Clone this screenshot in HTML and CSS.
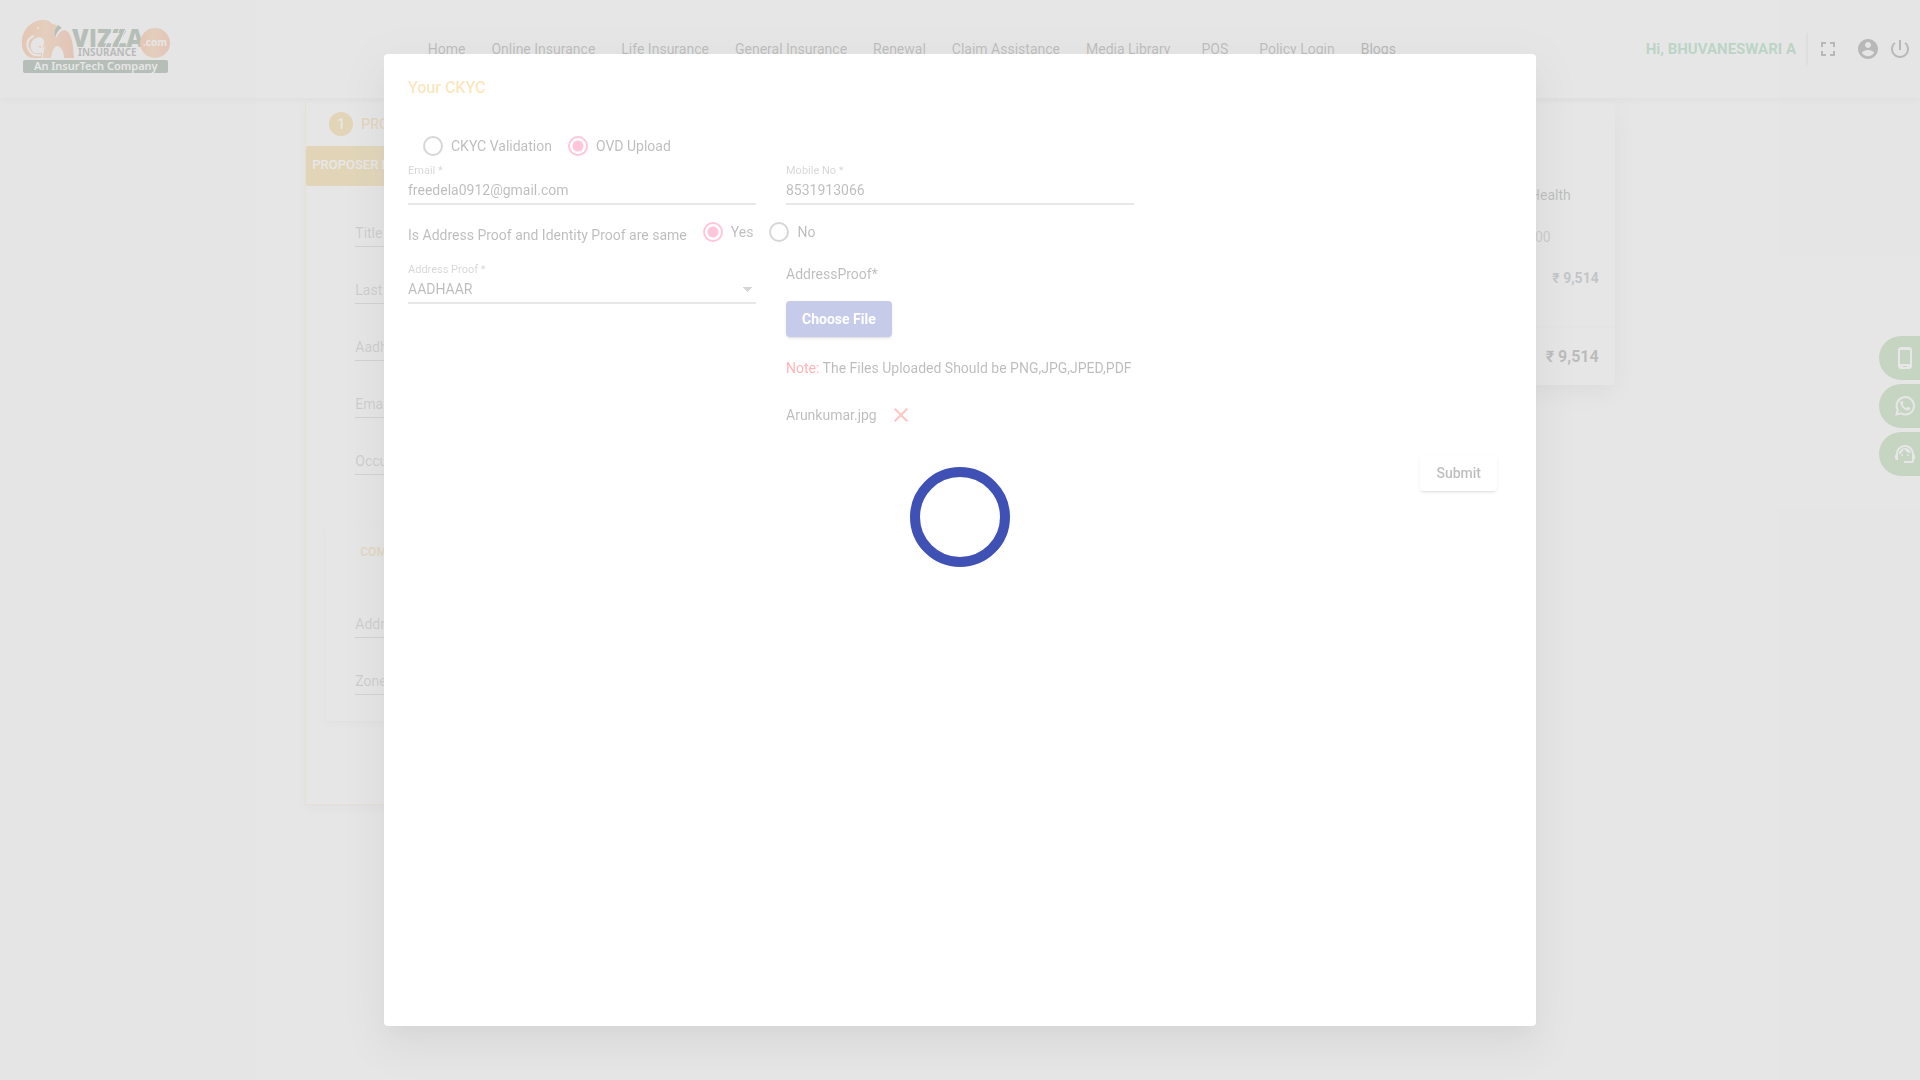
FILE: index.html
```
<!DOCTYPE html>
<html lang="en">
<head>
<meta charset="utf-8">
<meta name="viewport" content="width=device-width, initial-scale=1">
<title>Vizza Insurance</title>
<link rel="stylesheet" href="styles.css">
</head>
<body>
<header class="header">
  <a class="logo" href="#" aria-label="Vizza Insurance">
    <svg width="150" height="58" viewBox="0 0 150 58">
      <defs>
        <linearGradient id="orange" x1="0" y1="0" x2="1" y2="0"><stop offset="0" stop-color="#f3620c"/><stop offset=".45" stop-color="#f58a35"/><stop offset="1" stop-color="#ee5a1c"/></linearGradient>
      </defs>
      <path fill="url(#orange)" d="M0 25C-1 10 10 1 22 1c4 0 6 1 8 4l5 1c-2 5-2 9-1 13 2-4 5-8 9-8 5 2 7 9 8 16l1 12H42c0-6-2-11-7-12-4 1-5 7-6 12H21c0-5 1-9 3-12-3 3-6 3-8 0 3 1 6-1 6-4 0-4-4-6-8-4-5 2-7 8-4 13 2 3 6 2 10 2v5H12C5 39 0 33 0 25z"/>
      <path fill="none" stroke="#fff" stroke-width="2" d="M12 17c-7 2-8 9-5 14 2 4 6 6 12 5M20 20c1 6 1 9-2 12"/>
      <circle cx="16" cy="9" r="1" fill="#fff"/>
      <path fill="#163d20" d="M33 18c-1-5 0-9 3-12l4 3c-4 2-5 5-7 9z"/>
      <text class="logo-name" x="50" y="28">VIZZA</text>
      <path stroke="#fff" stroke-width="1" d="M92 9l-9 19M98 9l-9 19M104 9l-8 19"/>
      <text class="logo-sub" x="56" y="37">INSURANCE</text>
      <circle cx="133" cy="24" r="15" fill="url(#orange)"/>
      <text class="logo-com" x="121" y="27">.com</text>
      <rect x="1" y="41" width="145" height="13" rx="2" fill="#163d20"/>
      <text class="logo-tag" x="12" y="51">An InsurTech Company</text>
    </svg>
  </a>
  <nav class="nav">
    <a href="#">Home</a><a href="#">Online Insurance</a><a href="#">Life Insurance</a><a href="#">General Insurance</a><a href="#">Renewal</a><a href="#">Claim Assistance</a><a href="#">Media Library</a><a class="nav-wide" href="#">POS</a><a href="#">Policy Login</a><a class="nav-strong" href="#">Blogs</a>
  </nav>
  <div class="user">
    <span class="greeting">Hi, BHUVANESWARI A</span>
    <span class="divider"></span>
    <button class="icon-button icon-wide" aria-label="Full screen"><svg width="24" height="24" viewBox="0 0 24 24"><path d="M7 14H5v5h5v-2H7v-3zm-2-4h2V7h3V5H5v5zm12 7h-3v2h5v-5h-2v3zM14 5v2h3v3h2V5h-5z"/></svg></button>
    <button class="icon-button" aria-label="Account"><svg width="24" height="24" viewBox="0 0 24 24"><path d="M12 2C6.48 2 2 6.48 2 12s4.48 10 10 10 10-4.480 10-10S17.520 2 12 2zm0 3c1.660 0 3 1.340 3 3s-1.340 3-3 3-3-1.340-3-3 1.340-3 3-3zm0 14.200c-2.500 0-4.710-1.280-6-3.220.03-1.990 4-3.080 6-3.080 1.990 0 5.970 1.090 6 3.080-1.290 1.940-3.500 3.220-6 3.220z"/></svg></button>
    <button class="icon-button" aria-label="Log out"><svg width="24" height="24" viewBox="0 0 24 24"><path d="M13 3h-2v10h2V3zm4.830 2.170l-1.420 1.420C17.990 7.860 19 9.810 19 12c0 3.870-3.130 7-7 7s-7-3.130-7-7c0-2.190 1.010-4.140 2.580-5.420L6.170 5.170C4.230 6.820 3 9.260 3 12c0 4.970 4.030 9 9 9s9-4.030 9-9c0-2.740-1.230-5.180-3.170-6.830z"/></svg></button>
  </div>
</header>

<main class="page">
  <section class="proposal">
    <div class="step"><span class="step-number">1</span>PROPOSER</div>
    <h2 class="band">PROPOSER DETAILS</h2>
    <div class="proposal-fields">
      <input class="line-input" placeholder="Title *" aria-label="Title">
      <input class="line-input" placeholder="Last Name *" aria-label="Last Name">
      <input class="line-input" placeholder="Aadhaar" aria-label="Aadhaar">
      <input class="line-input" placeholder="Email *" aria-label="Email">
      <input class="line-input" placeholder="Occupation *" aria-label="Occupation">
    </div>
    <div class="address">
      <h3>COMMUNICATION</h3>
      <div class="address-fields">
        <input class="line-input" placeholder="Address *" aria-label="Address">
        <input class="line-input" placeholder="Zone *" aria-label="Zone">
      </div>
    </div>
  </section>
  <aside class="summary">
    <p class="plan">Health</p>
    <p class="cover">5,00,000</p>
    <p class="premium">₹ 9,514</p>
    <p class="total">₹ 9,514</p>
  </aside>
</main>

<div class="contacts">
  <button class="contact" aria-label="Phone"><svg width="24" height="24" viewBox="0 0 24 24"><path fill-rule="evenodd" d="M16 1H8C6.300 1 5 2.300 5 4v16c0 1.700 1.300 3 3 3h8c1.700 0 3-1.300 3-3V4c0-1.700-1.300-3-3-3zm-2 20h-4v-1h4v1zm3-3H7V4h10v14z"/></svg></button>
  <button class="contact" aria-label="WhatsApp"><svg width="24" height="24" viewBox="0 0 24 24"><path fill="none" stroke="#fff" stroke-width="2" d="M3.500 20.500l1.200-4.400A8.700 8.700 0 1 1 8 19.400z"/><path d="M8.500 7c-.9.600-1.400 1.600-1 2.800.8 3 3.600 5.800 6.800 6.600 1.300.3 2.400-.5 2.800-1.600v-.8l-2.500-1.200-1.200 1.300c-1.900-.8-3-2-3.800-3.700l.9-1.100L9.500 7z"/></svg></button>
  <button class="contact" aria-label="Support"><svg width="24" height="24" viewBox="0 0 24 24"><path d="M21 12.220C21 6.730 16.740 3 12 3c-4.690 0-9 3.650-9 9.280-.6.340-1 .98-1 1.720v2c0 1.100.9 2 2 2h1v-6.100c0-3.870 3.130-7 7-7s7 3.130 7 7V19h-8v2h8c1.100 0 2-.9 2-2v-1.220c.59-.31 1-.92 1-1.640v-2.300c0-.7-.41-1.310-1-1.620z"/><circle cx="9" cy="13" r="1"/><circle cx="15" cy="13" r="1"/><path d="M18 11.030C17.520 8.180 15.040 6 12.050 6c-3.030 0-6.290 2.510-6.030 6.450 2.470-1.010 4.330-3.210 4.860-5.890 1.310 2.630 4 4.440 7.120 4.470z"/></svg></button>
</div>

<div class="backdrop">
  <div class="dialog" role="dialog" aria-modal="true" aria-labelledby="dialog-title">
    <h1 class="dialog-title" id="dialog-title">Your CKYC</h1>
    <form class="form">
      <div class="radios mode">
        <label class="radio"><input type="radio" name="mode">CKYC Validation</label>
        <label class="radio"><input type="radio" name="mode" checked>OVD Upload</label>
      </div>
      <div class="row contact-row">
        <div class="field"><label for="email">Email *</label><input id="email" type="email" value="freedela0912@gmail.com"></div>
        <div class="field"><label for="mobile">Mobile No *</label><input id="mobile" type="tel" value="8531913066"></div>
      </div>
      <div class="same">
        <span class="same-text" id="same-text">Is Address Proof and Identity Proof are same</span>
        <div class="radios" role="radiogroup" aria-labelledby="same-text">
          <label class="radio"><input type="radio" name="same" checked>Yes</label>
          <label class="radio"><input type="radio" name="same">No</label>
        </div>
      </div>
      <div class="row proof-row">
        <div class="field"><label for="proof">Address Proof *</label>
          <select id="proof"><option>AADHAAR</option></select></div>
        <div class="upload">
          <span>AddressProof*</span>
          <button class="button primary" type="button">Choose File</button>
          <p class="note"><span>Note:</span> The Files Uploaded Should be PNG,JPG,JPED,PDF</p>
          <div class="file"><span>Arunkumar.jpg</span><button class="remove" type="button" aria-label="Remove file"><svg width="24" height="24" viewBox="0 0 24 24"><path d="M19 6.410L17.590 5 12 10.590 6.410 5 5 6.410 10.590 12 5 17.590 6.410 19 12 13.410 17.590 19 19 17.590 13.410 12z"/></svg></button></div>
        </div>
      </div>
      <button class="button submit" type="submit">Submit</button>
    </form>
  </div>
</div>

<div class="loading" role="status" aria-label="Loading"><div class="spinner"></div></div>
</body>
</html>
```
FILE: styles.css
```
* { box-sizing: border-box; }
body {
  margin: 0;
  min-height: 100vh;
  background: #fafafa;
  color: rgba(0, 0, 0, .87);
  font: 14px/20px Roboto, "Noto Sans", sans-serif;
}
h1, h2, h3, p { margin: 0; font-weight: 500; }
a { color: inherit; text-decoration: none; }
button, input, select { font: inherit; color: inherit; margin: 0; }
button { border: 0; padding: 0; background: none; }
svg { display: block; fill: currentColor; }

.header {
  position: relative;
  display: flex;
  align-items: center;
  justify-content: space-between;
  height: 98px;
  padding: 0 8px 0 22px;
  background: #fafafa;
  box-shadow: 0 2px 8px rgba(0, 0, 0, .16);
}
.logo { width: 150px; margin-top: -2px; }
.logo-name { font: 800 24px "Open Sans", sans-serif; fill: #163d20; }
.logo-sub { font: 700 10px "Noto Sans", sans-serif; fill: #222; }
.logo-com { font: 700 10px "Noto Sans", sans-serif; fill: #fff; }
.logo-tag { font: 600 11px "Noto Sans", sans-serif; fill: #fff; }
.nav { display: flex; gap: 26px; margin-left: 6px; }
.nav-wide { margin: 0 5px; }
.nav-strong { color: #000; }
.user { display: flex; align-items: center; }
.greeting { font-size: 15px; font-weight: 700; color: #28a060; }
.divider { width: 2px; height: 32px; margin: 0 8px 0 10px; background: #d8d8d8; }
.icon-button { width: 24px; height: 24px; margin-left: 8px; }
.icon-wide { margin: 0 8px 0 0; }

.page {
  display: flex;
  align-items: flex-start;
  justify-content: space-between;
  width: 68.2%;
  margin: 0 auto;
  padding-top: 4px;
}
.proposal {
  width: 70%;
  padding-bottom: 83px;
  border: 1px solid #f4d9a4;
  border-top: 0;
  border-radius: 2px;
  background: #fafafa;
  box-shadow: 0 4px 12px rgba(0, 0, 0, .12);
}
.step { display: flex; align-items: center; gap: 8px; height: 44px; padding-left: 23px; color: #e6a32a; font-weight: 500; }
.step-number { width: 24px; height: 24px; border-radius: 50%; background: #e6a617; color: #fff; line-height: 24px; text-align: center; }
.band { height: 40px; padding-left: 6px; border-radius: 2px; background: #e6a617; color: #fff; font-size: 13px; line-height: 38px; }
.proposal-fields, .address-fields { display: grid; gap: 33px; width: 30%; }
.proposal-fields { margin: 37px 0 0 49px; }
.line-input { display: block; width: 100%; height: 24px; padding: 0 0 3px; border: 0; border-bottom: 1px solid rgba(0, 0, 0, .42); background: none; }
.line-input::placeholder { color: rgba(0, 0, 0, .54); opacity: 1; }
.address { margin: 49px 20px 0; padding: 18px 29px 26px; box-shadow: 0 3px 8px rgba(0, 0, 0, .12); }
.address h3 { padding-left: 5px; color: #e6a32a; font-size: 12px; }
.address-fields { margin-top: 52px; }
.summary {
  width: 25%;
  border-radius: 4px;
  background: #fafafa;
  box-shadow: 0 8px 24px rgba(0, 0, 0, .2);
  text-align: right;
}
.plan { padding: 83px 44px 0 0; font-weight: 400; }
.cover { padding: 22px 64px 0 0; color: rgba(0, 0, 0, .6); font-weight: 400; }
.premium { padding: 21px 16px 38px 0; color: #455a64; font-weight: 700; }
.total { padding: 19px 16px 18px 0; border-top: 2px solid #eee; font-size: 16px; font-weight: 700; }

.contacts { position: fixed; top: 336px; right: 0; display: grid; gap: 4px; }
.contact { display: grid; place-items: center; width: 41px; height: 44px; padding-left: 11px; border-radius: 22px 0 0 22px; background: #60a94c; color: #fff; }

.backdrop { position: fixed; inset: 0; display: flex; align-items: center; justify-content: center; background: rgba(0, 0, 0, .32); }
.dialog {
  width: 60%;
  height: 90%;
  padding: 24px;
  border-radius: 4px;
  background: #fff;
  box-shadow: 0 11px 15px -7px rgba(0, 0, 0, .2), 0 24px 38px 3px rgba(0, 0, 0, .14), 0 9px 46px 8px rgba(0, 0, 0, .12);
}
.dialog-title { color: #f2a922; font-size: 16px; line-height: 20px; }
.form { display: flex; flex-direction: column; }
.radios { display: flex; gap: 16px; }
.mode { margin-top: 38px; padding-left: 15px; }
.radio { display: flex; align-items: center; gap: 8px; }
.radio input { width: 20px; height: 20px; border: 2px solid rgba(0, 0, 0, .54); border-radius: 50%; appearance: none; }
.radio input:checked { border-color: #ff4081; background: radial-gradient(circle, #ff4081 5px, transparent 6px); }
.row { display: grid; grid-template-columns: repeat(3, 1fr); gap: 30px; }
.contact-row { margin-top: 9px; }
.field label { display: block; color: rgba(0, 0, 0, .54); font-size: 11px; line-height: 12px; }
.field input, .field select {
  display: block;
  width: 100%;
  height: 28px;
  padding: 0;
  border: 0;
  border-bottom: 2px solid rgba(0, 0, 0, .3);
  border-radius: 0;
  background: none;
  appearance: none;
}
.field select {
  background-image: conic-gradient(from -45deg at 50% 100%, #757575 90deg, transparent 0);
  background-position: right 4px top 11px;
  background-size: 10px 5px;
  background-repeat: no-repeat;
}
.same { display: flex; gap: 16px; height: 23px; margin-top: 17px; }
.same-text { align-self: flex-end; }
.same .radios { align-self: flex-start; }
.proof-row { margin-top: 19px; }
.upload { display: flex; flex-direction: column; align-items: flex-start; white-space: nowrap; }
.button { height: 36px; padding: 0 16px; border-radius: 4px; font-weight: 500; box-shadow: 0 3px 1px -2px rgba(0, 0, 0, .2), 0 2px 2px rgba(0, 0, 0, .14), 0 1px 5px rgba(0, 0, 0, .12); }
.primary { margin-top: 17px; background: #3f51b5; color: #fff; font-weight: 700; }
.note { margin-top: 21px; font-weight: 400; }
.note span { color: #f00; }
.file { display: flex; align-items: center; gap: 12px; height: 24px; margin-top: 25px; }
.remove { color: #f44336; }
.submit { align-self: flex-end; margin: 28px 15px 0 0; background: #fff; }

.loading { position: fixed; inset: 0; display: flex; align-items: center; justify-content: center; padding-bottom: 46px; background: rgba(255, 255, 255, .7); }
.spinner { width: 100px; height: 100px; border: 10px solid #3f51b5; border-radius: 50%; }
```
